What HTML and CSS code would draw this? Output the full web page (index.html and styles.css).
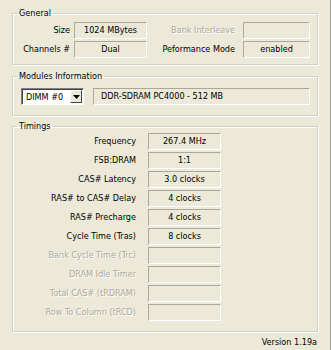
FILE: index.html
```html
<!DOCTYPE html>
<html lang="en">
<head>
  <meta charset="UTF-8" />
  <title>CPU-Z Memory</title>
  <link rel="stylesheet" href="styles.css">
</head>
<body>
  <div class="window">

    <fieldset class="group">
      <legend>General</legend>
      <div class="general-grid">
        <span class="lbl">Size</span>
        <span class="field">1024 MBytes</span>
        <span class="lbl off">Bank Interleave</span>
        <span class="field"></span>
        <span class="lbl">Channels #</span>
        <span class="field">Dual</span>
        <span class="lbl">Peformance Mode</span>
        <span class="field">enabled</span>
      </div>
    </fieldset>

    <fieldset class="group modules">
      <legend>Modules Information</legend>
      <div class="module-row">
        <div class="combo">
          <span class="combo-text">DIMM #0</span>
          <span class="combo-btn">
            <svg width="7" height="4" viewBox="0 0 7 4"><path d="M0 0h7L3.5 4z" fill="#000"/></svg>
          </span>
        </div>
        <div class="field wide">DDR-SDRAM PC4000 - 512 MB</div>
      </div>
    </fieldset>

    <fieldset class="group timings">
      <legend>Timings</legend>
      <div class="timing-grid">
        <span class="lbl">Frequency</span><span class="field">267.4 MHz</span>
        <span class="lbl">FSB:DRAM</span><span class="field">1:1</span>
        <span class="lbl">CAS# Latency</span><span class="field">3.0 clocks</span>
        <span class="lbl">RAS# to CAS# Delay</span><span class="field">4 clocks</span>
        <span class="lbl">RAS# Precharge</span><span class="field">4 clocks</span>
        <span class="lbl">Cycle Time (Tras)</span><span class="field">8 clocks</span>
        <span class="lbl off">Bank Cycle Time (Trc)</span><span class="field"></span>
        <span class="lbl off">DRAM Idle Timer</span><span class="field"></span>
        <span class="lbl off">Total CAS# (tRDRAM)</span><span class="field"></span>
        <span class="lbl off">Row To Column (tRCD)</span><span class="field"></span>
      </div>
    </fieldset>

    <div class="version">Version 1.19a</div>
  </div>
</body>
</html>
```

FILE: styles.css
```css
* {
  box-sizing: border-box;
}

html, body {
  margin: 0;
  padding: 0;
  background-color: #ece9d8;
}

body {
  font-family: 'DejaVu Sans Condensed', 'Liberation Sans', Arial, sans-serif;
  font-size: 9px;
  color: #000;
}

.window {
  width: 331px;
  height: 350px;
  padding-top: 6px;
  border-right: 1px solid #a3a193;
}

.group {
  margin: 0 0 0 12px;
  width: 306px;
  min-width: 0;
  padding: 0;
  border: 1px solid #d0d0bf;
  box-shadow: 1px 1px 0 #fff, inset 1px 1px 0 #fff;
}

.group legend {
  margin-left: 4px;
  padding: 0 2px;
  line-height: 14px;
}

.modules {
  margin-top: 4px;
}

.timings {
  margin-top: 3px;
}

.lbl {
  text-align: right;
  line-height: 17px;
  white-space: nowrap;
}

.lbl.off {
  color: #aca899;
  text-shadow: 1px 1px 0 #fff;
}

.field {
  height: 17px;
  line-height: 15px;
  text-align: center;
  white-space: nowrap;
  border: 1px solid;
  border-color: #aca899 #fff #fff #aca899;
}

.general-grid {
  display: grid;
  grid-template-columns: 57px 73px 88px 67px;
  grid-auto-rows: 17px;
  column-gap: 4px;
  row-gap: 2px;
  padding: 2px 0 6px 0;
}

.general-grid .lbl:nth-child(3),
.general-grid .lbl:nth-child(7) {
  padding-right: 4px;
}

.module-row {
  display: flex;
  gap: 9px;
  padding: 5px 0 10px 8px;
}

.combo {
  display: flex;
  width: 63px;
  height: 17px;
  background: #fff;
  border: 1px solid;
  border-color: #808080 #fff #fff #808080;
  box-shadow: inset 1px 1px 0 #404040;
}

.combo-text {
  flex: 1;
  padding: 1px 0 0 4px;
  line-height: 14px;
}

.combo-btn {
  width: 12px;
  height: 13px;
  margin: 1px 1px 0 0;
  display: flex;
  align-items: center;
  justify-content: center;
  background: #ece9d8;
  border: 1px solid;
  border-color: #fff #404040 #404040 #fff;
}

.field.wide {
  width: 217px;
  text-align: left;
  padding-left: 7px;
}

.timing-grid {
  display: grid;
  grid-template-columns: 123px 73px;
  grid-auto-rows: 17px;
  column-gap: 12px;
  row-gap: 2px;
  padding: 0 0 10px 0;
}

.version {
  margin: 3px 13px 0 0;
  line-height: 14px;
  text-align: right;
}
```
